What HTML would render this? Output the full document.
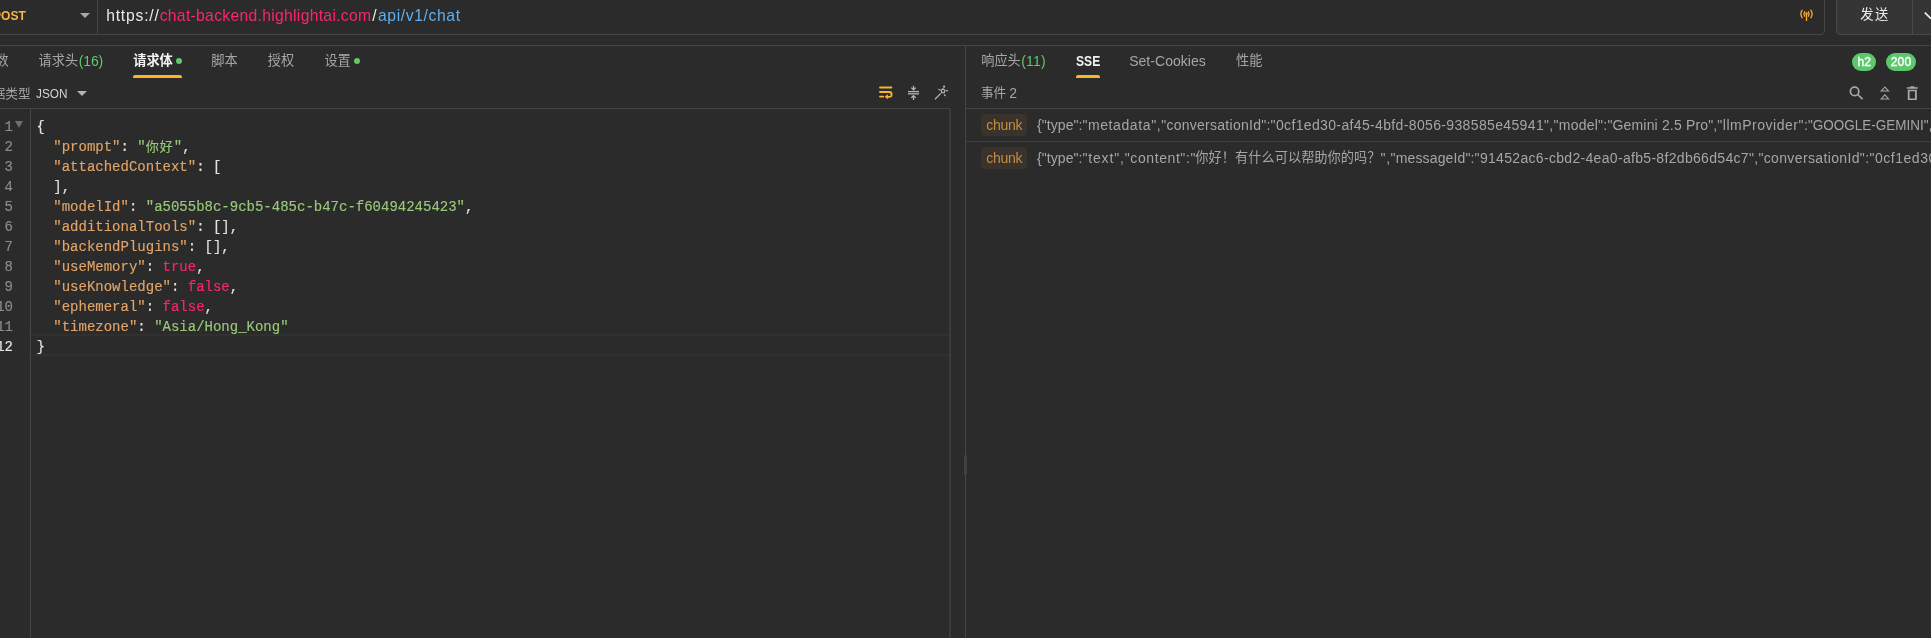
<!DOCTYPE html>
<html><head><meta charset="utf-8">
<style>
*{box-sizing:border-box;margin:0;padding:0}
html,body{width:1931px;height:638px;overflow:hidden;background:#2b2b2b;}
body{position:relative;will-change:transform;font-family:"Liberation Sans","Noto Sans CJK SC",sans-serif;color:#a8a8a8;font-size:14px;}
.abs{position:absolute;white-space:nowrap;}
.hl{position:absolute;height:1px;background:#454545;}
.vl{position:absolute;width:1px;background:#454545;}
.g{color:#5fc96b}
.line{position:absolute;left:0;top:0;height:20px;line-height:20px;white-space:nowrap}
.sg{position:absolute;top:0;white-space:pre}
.cj{font-family:"Liberation Sans","Noto Sans CJK SC",sans-serif}
.ul{position:absolute;height:3px;background:#fbb429;border-radius:2px 2px 0 0}
.dot{position:absolute;width:6px;height:6px;border-radius:50%;background:#5fc96b}
.code{position:absolute;left:36.5px;top:117px;font-family:"Liberation Mono","Noto Sans CJK SC",monospace;font-size:14px;line-height:20px;color:#e2e2e2;white-space:pre;-webkit-text-stroke:0.15px}
.cl{height:20px;overflow:visible}.k{color:#e0a468}.s{color:#98c87a}.b{color:#f92672}
.ln{position:absolute;left:-20px;width:33px;text-align:right;font-family:"Liberation Mono",monospace;font-size:14px;line-height:20px;height:20px;color:#8c8c8c;-webkit-text-stroke:0.15px}
.chunk{position:absolute;left:981px;width:46px;height:22px;border-radius:4px;background:#39332b}
.pill{position:absolute;top:53px;height:18px;border-radius:9px;background:#5cc76b}
svg{position:absolute;overflow:visible}
</style></head><body>

<div class="abs" style="left:-10px;top:-10px;width:1835px;height:45px;border:1px solid #454545;border-radius:4px;"></div>
<div class="vl" style="left:97px;top:0;height:34px"></div>
<div class="line" style="top:6px;font-size:13px;font-weight:bold;color:#fbb347"><span class="sg" style="left:-7.10px;transform-origin:0 50%;transform:scaleX(0.9267)">POST</span></div>
<div class="abs" style="left:80px;top:13px;width:0;height:0;border-left:5px solid transparent;border-right:5px solid transparent;border-top:5.5px solid #a8a8a8"></div>
<div class="line" style="top:6px;font-size:15.7px;color:#e8e8e8"><span class="sg" style="left:106.20px;letter-spacing:0.802px">https://</span><span style="color:#f7266f"><span class="sg" style="left:159.70px;letter-spacing:0.304px">chat-backend.highlightai.com</span></span><span class="sg" style="left:372.30px;letter-spacing:1.342px">/</span><span style="color:#61afef"><span class="sg" style="left:378.00px;letter-spacing:0.612px">api/v1/chat</span></span></div>
<div class="abs" style="left:1836px;top:-10px;width:120px;height:45px;border:1px solid #484848;border-radius:4px;background:#353535"></div>
<div class="vl" style="left:1912px;top:0;height:34px;background:#484848"></div>
<div class="line cj" style="top:5px;font-size:13.3px;color:#ededed"><span class="sg" style="left:1860.20px;letter-spacing:1.553px">发送</span></div>
<svg style="left:1920px;top:8px" width="11" height="16" viewBox="0 0 11 16"><path d="M4.8 4.6 L11 10.7" stroke="#ededed" stroke-width="1.8" fill="none"/></svg>
<svg style="left:1799px;top:8px" width="15" height="14" viewBox="0 0 15 14"><g fill="none" stroke="#f5ab2e" stroke-width="1.3" stroke-linecap="round"><path d="M3.2 2.2 Q0.6 6 3.2 9.8"/><path d="M5.6 3.8 Q4.2 6 5.6 8.2"/><path d="M11.8 2.2 Q14.4 6 11.8 9.8"/><path d="M9.4 3.8 Q10.8 6 9.4 8.2"/><path d="M7.5 6.6 V12.4" stroke-width="1.4"/><circle cx="7.5" cy="5.6" r="0.6" fill="#f5ab2e"/></g></svg>
<div class="hl" style="left:0;top:45px;width:1931px"></div>
<div class="vl" style="left:965px;top:45px;height:593px"></div>
<div class="line cj" style="top:51px;color:#a6a6a6;font-size:13.2px"><span class="sg" style="left:-4.60px;letter-spacing:0.013px">数</span><span class="sg" style="left:38.60px;letter-spacing:0.013px">请求头</span><span class="sg" style="left:211.20px;letter-spacing:0.013px">脚本</span><span class="sg" style="left:267.80px;letter-spacing:0.013px">授权</span><span class="sg" style="left:324.40px;letter-spacing:0.013px">设置</span><b style="color:#f2f2f2"><span class="sg" style="left:133.20px;letter-spacing:0.013px">请求体</span></b></div>
<div class="line" style="top:51px;font-size:14px;color:#5fc96b"><span class="sg" style="left:78.70px;letter-spacing:-0.099px">(16)</span></div>
<div class="dot" style="left:175.5px;top:58px"></div>
<div class="ul" style="left:133px;top:75px;width:49px"></div>
<div class="dot" style="left:353.6px;top:58px"></div>
<div class="line cj" style="top:83.5px;color:#a6a6a6;font-size:12.6px"><span class="sg" style="left:-7.30px;letter-spacing:0.006px">据类型</span></div>
<div class="line" style="top:83.5px;font-size:13.6px;color:#d4d4d4"><span class="sg" style="left:36.00px;transform-origin:0 50%;transform:scaleX(0.8661)">JSON</span></div>
<div class="abs" style="left:77px;top:91px;width:0;height:0;border-left:5.5px solid transparent;border-right:5.5px solid transparent;border-top:5.5px solid #b4b4b4"></div>
<svg style="left:878px;top:85px" width="16" height="15" viewBox="0 0 16 15"><g fill="none" stroke="#fbb429" stroke-width="1.8" stroke-linecap="round"><path d="M2 2.5 H13.4"/><path d="M2 7 H11.2 a2.4 2.4 0 0 1 0 4.8 H9.5"/><path d="M2 11.6 H5.2"/></g><path d="M9.8 9.2 L6.6 11.7 L9.8 14.2 Z" fill="#fbb429"/></svg>
<svg style="left:906px;top:85px" width="15" height="16" viewBox="0 0 15 16"><g fill="none" stroke="#b4b4b4" stroke-width="1.3"><path d="M2 6.6 H13"/><path d="M2 8.8 H13"/><path d="M7.5 0.8 V4.8 M5.2 2.6 L7.5 4.9 L9.8 2.6"/><path d="M7.5 15 V10.8 M5.2 12.9 L7.5 10.6 L9.8 12.9"/></g></svg>
<svg style="left:934px;top:85px" width="15" height="15" viewBox="0 0 15 15"><g fill="none" stroke="#b4b4b4" stroke-width="1.3"><path d="M1 14.2 L6.8 8.4"/><path d="M9 3.9 L10.9 5.3 L10.2 7.6 L7.8 7.6 L7.1 5.3 Z"/></g><g fill="#b4b4b4"><rect x="9.1" y="0.6" width="2" height="2"/><path d="M3.8 3.6 L6.6 4.4 L5.4 5.8Z"/><path d="M11.9 5 L14.4 5 L13 7Z"/><path d="M10.4 8.8 L12.4 11.6 L9.8 10.4Z"/></g></svg>
<div class="hl" style="left:0;top:108px;width:950px"></div>
<div class="vl" style="left:949px;top:109px;width:2px;height:529px;background:#3b3b3b"></div>
<div class="abs" style="left:964px;top:455px;width:3px;height:20px;background:#404040;border-radius:1px"></div>
<div class="vl" style="left:30px;top:109px;height:529px"></div>
<div class="hl" style="left:31px;top:334px;height:2px;width:918px;background:#303030"></div>
<div class="hl" style="left:31px;top:354px;height:2px;width:918px;background:#303030"></div>
<div class="ln" style="top:117px">1</div>
<div class="ln" style="top:137px">2</div>
<div class="ln" style="top:157px">3</div>
<div class="ln" style="top:177px">4</div>
<div class="ln" style="top:197px">5</div>
<div class="ln" style="top:217px">6</div>
<div class="ln" style="top:237px">7</div>
<div class="ln" style="top:257px">8</div>
<div class="ln" style="top:277px">9</div>
<div class="ln" style="top:297px">10</div>
<div class="ln" style="top:317px">11</div>
<div class="ln" style="top:337px;color:#e4e4e4">12</div>
<div class="abs" style="left:15.3px;top:121px;width:0;height:0;border-left:4px solid transparent;border-right:4px solid transparent;border-top:7.4px solid #6e6e6e"></div>
<div class="code"><div class="cl">{</div><div class="cl">  <span class="k">"prompt"</span>: <span class="s">"<span style="font-size:13px;letter-spacing:1px">你好</span>"</span>,</div><div class="cl">  <span class="k">"attachedContext"</span>: [</div><div class="cl">  ],</div><div class="cl">  <span class="k">"modelId"</span>: <span class="s">"a5055b8c-9cb5-485c-b47c-f60494245423"</span>,</div><div class="cl">  <span class="k">"additionalTools"</span>: [],</div><div class="cl">  <span class="k">"backendPlugins"</span>: [],</div><div class="cl">  <span class="k">"useMemory"</span>: <span class="b">true</span>,</div><div class="cl">  <span class="k">"useKnowledge"</span>: <span class="b">false</span>,</div><div class="cl">  <span class="k">"ephemeral"</span>: <span class="b">false</span>,</div><div class="cl">  <span class="k">"timezone"</span>: <span class="s">"Asia/Hong_Kong"</span></div><div class="cl">}</div></div>
<div class="line cj" style="top:51px;color:#a6a6a6;font-size:13.2px"><span class="sg" style="left:981.20px;letter-spacing:0.013px">响应头</span><span class="sg" style="left:1236.00px;letter-spacing:0.013px">性能</span></div>
<div class="line" style="top:51px;font-size:14px;color:#5fc96b"><span class="sg" style="left:1021.30px;letter-spacing:0.161px">(11)</span></div>
<div class="line" style="top:51px;font-size:14.4px;color:#f2f2f2;font-weight:bold"><span class="sg" style="left:1075.70px;transform-origin:0 50%;transform:scaleX(0.8404)">SSE</span></div>
<div class="ul" style="left:1075.5px;top:75px;width:24.5px"></div>
<div class="line" style="top:51px;font-size:14px;color:#a6a6a6"><span class="sg" style="left:1129.20px;letter-spacing:0.031px">Set-Cookies</span></div>
<div class="pill" style="left:1852px;width:24px"></div><div class="pill" style="left:1886px;width:30px"></div>
<div class="line" style="top:52px;font-size:12px;line-height:20px;color:#fff;-webkit-text-stroke:0.4px"><span class="sg" style="left:1857.50px;letter-spacing:-0.024px">h2</span><span class="sg" style="left:1890.80px;letter-spacing:0.126px">200</span></div>
<div class="line cj" style="top:83px;color:#a6a6a6;font-size:12.6px"><span class="sg" style="left:981.00px;letter-spacing:0.006px">事件</span></div>
<div class="line" style="top:83px;font-size:14px;color:#a6a6a6"><span class="sg" style="left:1009.30px;letter-spacing:0.914px">2</span></div>
<svg style="left:1848px;top:85px" width="16" height="16" viewBox="0 0 16 16"><g fill="none" stroke="#a8a8a8" stroke-width="1.7"><circle cx="6.6" cy="6.4" r="4.2"/><path d="M9.7 9.5 L14.6 14.2"/></g></svg>
<svg style="left:1879px;top:85px" width="12" height="16" viewBox="0 0 12 16"><g fill="none" stroke="#a8a8a8" stroke-width="1.1" stroke-linejoin="miter"><path d="M5.9 2.0 L9.56 6.05 H2.24 Z"/><path d="M5.9 9.9 L9.56 13.95 H2.24 Z"/></g></svg>
<svg style="left:1906px;top:85px" width="13" height="16" viewBox="0 0 13 16"><g fill="#a8a8a8"><path d="M0.8 2.2 H3.8 L4.6 1.2 H8 L8.8 2.2 H11.8 V3.8 H0.8 Z"/><path d="M1.8 4.8 H10.8 V15 H1.8 Z M3.6 6.2 V13.4 H9 V6.2 Z" fill-rule="evenodd"/></g></svg>
<div class="hl" style="left:966px;top:108px;width:965px"></div>
<div class="hl" style="left:966px;top:141px;width:965px;background:#3e3e3e"></div>
<div class="chunk" style="top:114px"></div>
<div class="line" style="top:114px;line-height:22px;height:22px;font-size:14px;color:#c18e42"><span class="sg" style="left:986.20px;letter-spacing:-0.232px">chunk</span></div>
<div class="chunk" style="top:147px"></div>
<div class="line" style="top:147px;line-height:22px;height:22px;font-size:14px;color:#c18e42"><span class="sg" style="left:986.20px;letter-spacing:-0.232px">chunk</span></div>
<div class="line" style="top:115px;font-size:14px;color:#a6a6a6"><span class="sg" style="left:1037.10px;letter-spacing:0.042px">{"type":</span><span class="sg" style="left:1082.40px;letter-spacing:0.600px">"metadata",</span><span class="sg" style="left:1161.20px;letter-spacing:0.266px">"conversationId":</span><span class="sg" style="left:1270.60px;letter-spacing:0.355px">"0cf1ed30-af45-4bfd-8056-938585e45941",</span><span class="sg" style="left:1553.60px;letter-spacing:0.230px">"model":</span><span class="sg" style="left:1607.40px;letter-spacing:0.165px">"Gemini 2.5 Pro",</span><span class="sg" style="left:1717.30px;letter-spacing:0.518px">"llmProvider":</span><span class="sg" style="left:1808.40px;transform-origin:0 50%;transform:scaleX(0.9631)">"GOOGLE-GEMINI",</span></div>
<div class="line" style="top:148px;font-size:14px;color:#a6a6a6"><span class="sg" style="left:1037.10px;letter-spacing:0.042px">{"type":</span><span class="sg" style="left:1082.40px;letter-spacing:0.858px">"text",</span><span class="sg" style="left:1124.80px;letter-spacing:0.585px">"content":</span><span class="sg" style="left:1190.40px;letter-spacing:-0.170px">"</span><span class="cj" style="font-size:13.2px"><span class="sg" style="left:1195.20px;letter-spacing:0.055px">你好！有什么可以帮助你的吗？</span></span><span class="sg" style="left:1380.60px;letter-spacing:0.570px">",</span><span class="sg" style="left:1390.60px;letter-spacing:0.141px">"messageId":</span><span class="sg" style="left:1474.60px;letter-spacing:0.316px">"91452ac6-cbd2-4ea0-afb5-8f2db66d54c7",</span><span class="sg" style="left:1758.40px;letter-spacing:0.360px">"conversationId":</span><span class="sg" style="left:1869.40px;letter-spacing:0.536px">"0cf1ed30-</span></div>

</body></html>
